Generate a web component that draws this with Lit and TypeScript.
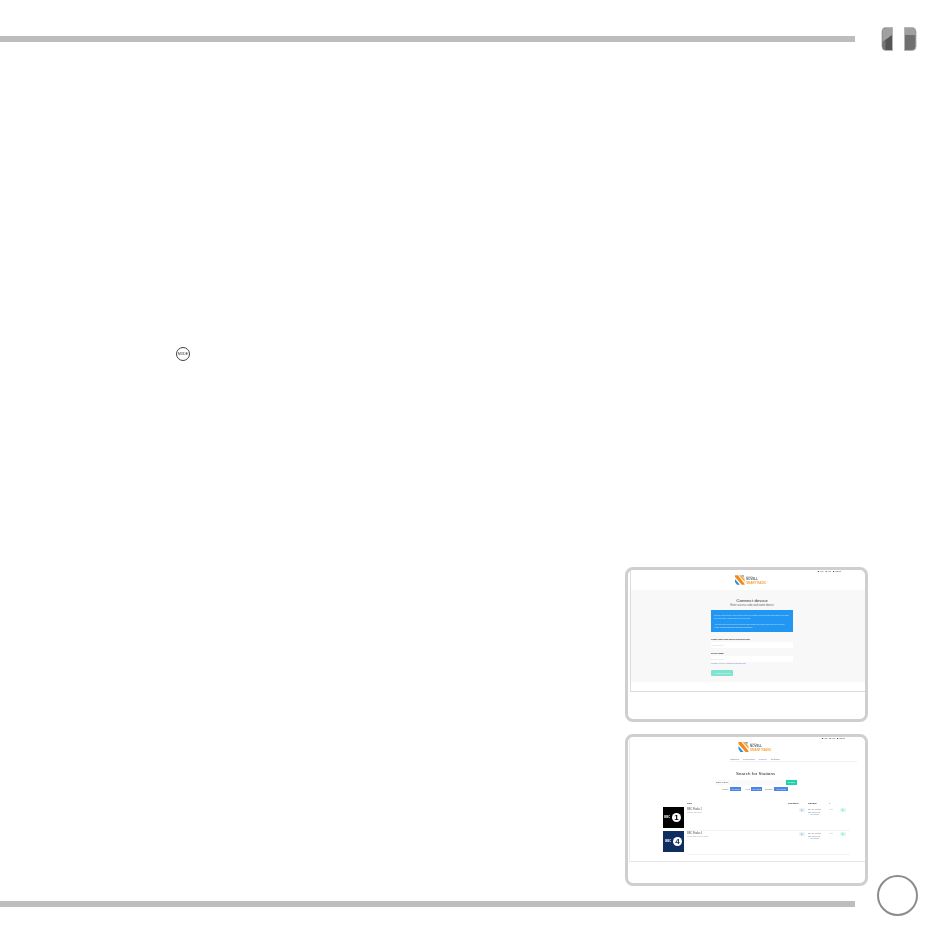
import { LitElement, html, css, svg } from "lit";
import { customElement } from "lit/decorators.js";

const logo = (w: number, h: number, l1: string, l2: string) => html`<svg class="logo" width=${w} height=${h} viewBox="0 0 32 10">
  ${svg`<path d="M0 0h3l7 9v1H7L0 2z" fill="#f08a24"/><path d="M4 0h3l3 4v3z" fill="#f5b04a"/><path d="M0 4l5 6H2L0 7z" fill="#2a8fd0"/><path d="M7 0h2v2z" fill="#2a8fd0"/>
  <text x="11.500" y="1.800" font-size="1.600" fill="#999" font-family="Liberation Sans">Welcome</text>
  <text x="11.500" y="5.200" font-size="3" font-weight="700" fill="#55606e" font-family="Liberation Sans">${l1}</text>
  <text x="11.500" y="9.200" font-size="3" font-weight="700" fill="#f2a33a" font-family="Liberation Sans">${l2}</text>`}
</svg>`;

const links = html`<div class="links"><span>■ Help</span><span>■ Acct</span><span>■ Logout</span></div>`;

@customElement("app-root")
export class AppRoot extends LitElement {
  static styles = css`
    :host { display: block; width: 950px; height: 950px; background: #fff; font-family: "Liberation Sans", Arial, sans-serif; overflow: hidden; }
    .page { display: flow-root; height: 950px; }
    .head { display: flex; align-items: center; height: 23px; margin-top: 27px; }
    .bar { width: 855px; height: 6px; background: #bdbdbd; flex: none; }
    .head .bar { margin-top: 1px; }
    .tabs { display: flex; gap: 11px; margin-left: 26px; }
    .tabs svg { display: block; filter: blur(0.3px); }
    .main { display: flex; }
    .left { width: 877px; flex: none; padding: 297px 0 9px; }
    .mode { display: block; margin-left: 176px; width: 14px; height: 14px; box-sizing: border-box; border: 1px solid #444; border-radius: 50%; font-size: 3.300px; font-weight: 400; line-height: 12px; text-align: center; color: #222; white-space: nowrap; filter: blur(0.25px); }
    .frame { box-sizing: border-box; width: 243px; margin-left: 625px; border: 3px solid #cfcfcf; border-radius: 8px; background: #fff; overflow: hidden; }
    .f1 { height: 155px; margin-top: 206px; }
    .f2 { height: 152px; margin-top: 12px; }
    .foot { margin-top: 15px; }
    .circle { box-sizing: border-box; width: 41px; height: 41px; border: 2px solid #8c8c8c; border-radius: 50%; align-self: flex-end; flex: none; }
    .screen { box-sizing: border-box; margin-left: 2px; border-left: 1px solid #dcdcdc; border-bottom: 1px solid #dcdcdc; display: flex; flex-direction: column; filter: blur(0.35px); }
    .f1 .screen { height: 122px; }
    .f2 .screen { height: 125px; margin-left: 1px; border-left-color: #ececec; border-bottom-color: #e6e6e6; }
    .top { height: 20px; flex: none; }
    .links { display: flex; justify-content: flex-end; gap: 2px; font-size: 2px; line-height: 3px; color: #444; white-space: nowrap; }
    .f1 .links { padding: 0 24px 0 0; }
    .f2 .links { padding: 0 20px 0 0; }
    .logo { display: block; }
    .f1 .logo { margin: 2px 0 0 104px; }
    .f2 .logo { margin: 2px 0 0 108px; }
    .grey { background: #f8f8f8; height: 92px; flex: none; padding-left: 80px; }
    .form { width: 82px; display: flex; flex-direction: column; font-size: 2.600px; line-height: 3px; color: #444; }
    .form h2 { margin: 8px 0 0; font-size: 4.400px; line-height: 6px; font-weight: 400; text-align: center; color: #222; letter-spacing: 0.100px; }
    .sub { font-size: 2.700px; line-height: 4px; text-align: center; color: #666; margin-bottom: 2px; white-space: nowrap; }
    .info { box-sizing: border-box; background: #2196f3; height: 22px; padding: 4px 3px; color: #d8ecff; font-size: 2.100px; line-height: 3px; display: flex; flex-direction: column; gap: 3px; }
    .lab { font-weight: 700; color: #222; white-space: nowrap; font-size: 2.100px; }
    .lab.a { margin-top: 6px; }
    .lab.b { margin-top: 4px; }
    .inp { background: #fff; height: 6px; font-size: 2.200px; line-height: 6px; color: #ccc; margin-top: 1px; }
    .help { font-size: 1.900px; color: #888; white-space: nowrap; }
    .help b { color: #5b7fd6; font-weight: 400; }
    .go { width: 22px; height: 6px; margin-top: 5px; background: #7fe3cf; border-radius: 1px; color: #eafff9; font-size: 2.200px; line-height: 6px; text-align: center; white-space: nowrap; }

    .f2 .screen > .top { height: 19px; }
    .nav { display: flex; gap: 4px; margin: 0 8px 0 100px; padding-top: 2px; font-size: 2.500px; line-height: 3px; color: #777; height: 3px; border-bottom: 1px solid #f2f2f2; flex: none; }
    .nav .on { color: #5b8fd6; }
    .content { display: flex; flex-direction: column; align-items: flex-start; }
    .st { margin: 9px 0 0 106px; font-size: 4.400px; line-height: 6px; color: #222; white-space: nowrap; letter-spacing: 0.100px; }
    .search { display: flex; margin: 3px 0 0 85px; }
    .q { width: 70px; height: 5px; background: #fafafa; color: #666; font-size: 2.500px; line-height: 5px; padding-left: 1px; }
    .sb { width: 11px; height: 5px; background: #1fd1a8; color: #e6fff8; font-size: 2.300px; line-height: 5px; text-align: center; }
    .filters { display: flex; align-items: center; gap: 1px; margin: 2px 0 0 92px; font-size: 2.200px; line-height: 4px; color: #666; white-space: nowrap; }
    .chip { background: #4a86e8; color: #e8f0ff; height: 4px; text-align: center; }
    .c1 { width: 11px; margin-right: 3px; }
    .c2 { width: 11px; margin-right: 2px; }
    .c3 { width: 14px; font-size: 1.900px; }
    .fl { width: 7px; }
    .fl.s { width: 5px; }
    .fl.m { width: 8px; }
    .table { display: grid; grid-template-columns: 24px 101px 20px 21px 9px 12px; margin: 11px 0 0 33px; font-size: 2.500px; line-height: 3px; color: #666; }
    .th { font-weight: 700; color: #333; height: 5px; white-space: nowrap; }
    .cell { height: 24px; padding-top: 1px; box-sizing: border-box; white-space: nowrap; border-bottom: 1px solid #f4f4f4; }
    .thumbcell { height: 24px; border-bottom: none; padding-top: 0; }
    .thumb { width: 21px; height: 21px; padding-right: 2px; box-sizing: border-box; display: flex; align-items: center; justify-content: center; gap: 1.500px; color: #fff; }
    .t1 { background: #000; }
    .t2 { background: #0f2e60; padding-right: 0; }
    .bbc { font-size: 2.600px; font-weight: 700; line-height: 3px; letter-spacing: 0.200px; }
    .num { width: 9px; height: 9px; border-radius: 50%; background: #fff; font-size: 8px; font-weight: 700; line-height: 9px; text-align: center; }
    .t1 .num { color: #000; }
    .t2 .num { color: #0f2e60; }
    .small { font-size: 2.100px; color: #aaa; }
    .name { color: #555; font-size: 2.600px; }
    .pill { width: 6px; height: 4px; border-radius: 2px; background: #e3f1f6; color: #3a7d99; font-size: 3px; line-height: 4px; text-align: center; margin: 0 0 0 11px; }
    .pill.g { background: #d6f7ee; color: #18b890; margin-left: 2px; }
    .link { color: #5b8fd6; }
    .stream { font-size: 1.900px; line-height: 2.600px; color: #888; }
  `;

  private row(cls: string, n: string, name: string, sub: string) {
    return html`
      <div class="cell thumbcell"><div class="thumb ${cls}"><span class="bbc">BBC</span><span class="num">${n}</span></div></div>
      <div class="cell"><div class="name">${name}</div><div class="small">${sub}</div></div>
      <div class="cell"><div class="pill">+</div></div>
      <div class="cell stream"><div>Stream location</div><div>128 kbps MP3</div><div class="link">+ Add stream</div></div>
      <div class="cell small">Add</div>
      <div class="cell"><div class="pill g">+</div></div>`;
  }

  render() {
    return html`<div class="page">
      <div class="head">
        <div class="bar"></div>
        <div class="tabs">
          <svg width="12" height="24" viewBox="0 0 12 24">
            <path d="M5 .5h6.500v23H5a4 4 0 0 1-4-4V4.500a4 4 0 0 1 4-4z" fill="#555" stroke="#b5b5b5"/>
            <path d="M5 1h6v7L1.500 15V4.500A3.500 3.500 0 0 1 5 1z" fill="#a0a0a0"/>
            <path d="M1.500 15l3-2.200V23a3.500 3.500 0 0 1-3-3.500z" fill="#757575"/>
          </svg>
          <svg width="13" height="24" viewBox="0 0 13 24">
            <path d="M.5.500H8a4 4 0 0 1 4 4v15a4 4 0 0 1-4 4H.5z" fill="#707070" stroke="#b5b5b5"/>
            <path d="M1 1h7a3.500 3.500 0 0 1 3.500 3.500V8H1z" fill="#a0a0a0"/>
          </svg>
        </div>
      </div>
      <div class="main">
        <div class="left">
          <div class="mode">MODE</div>
          <div class="frame f1">
            <div class="screen">
              <div class="top">${links}${logo(31, 10, "NOVELL", "SMART RADIO")}</div>
              <div class="grey">
                <div class="form">
                  <h2>Connect device</h2>
                  <div class="sub">Enter access code and name device</div>
                  <div class="info">
                    <div>To use your device, you need to enter its unique access code and name it so that you can find it easily later on in the app.</div>
                    <div>You can find your device's access code within the main menu on your device under Configuration/Network/Registration.</div>
                  </div>
                  <div class="lab a">Please enter your device's access code</div>
                  <div class="inp">Access code</div>
                  <div class="lab b">Device name</div>
                  <div class="inp">Device name</div>
                  <div class="help">Register a device <b>without an access code</b></div>
                  <div class="go">✓ Connect device</div>
                </div>
              </div>
            </div>
          </div>
          <div class="frame f2">
            <div class="screen">
              <div class="top">${links}${logo(33, 10, "NOVELL", "SMART RADIO")}</div>
              <div class="nav"><span>Stations</span><span>Favourites</span><span class="on">Search</span><span>Settings</span></div>
              <div class="content">
                <div class="st">Search for Stations</div>
                <div class="search"><div class="q">BBC Radio</div><div class="sb">Search</div></div>
                <div class="filters">
                  <span class="fl">Genre:</span><span class="chip c1">Any genre</span>
                  <span class="fl s">Area:</span><span class="chip c2">Any area</span>
                  <span class="fl m">Country:</span><span class="chip c3">Any country</span>
                </div>
                <div class="table">
                  <div class="th"></div><div class="th">Title</div><div class="th">Location</div><div class="th">Stream</div><div class="th">#</div><div class="th"></div>
                  ${this.row("t1", "1", "BBC Radio 1", "Station category")}
                  ${this.row("t2", "4", "BBC Radio 4", "News and speech radio")}
                </div>
              </div>
            </div>
          </div>
          <div class="bar foot"></div>
        </div>
        <div class="circle"></div>
      </div>
    </div>`;
  }
}
